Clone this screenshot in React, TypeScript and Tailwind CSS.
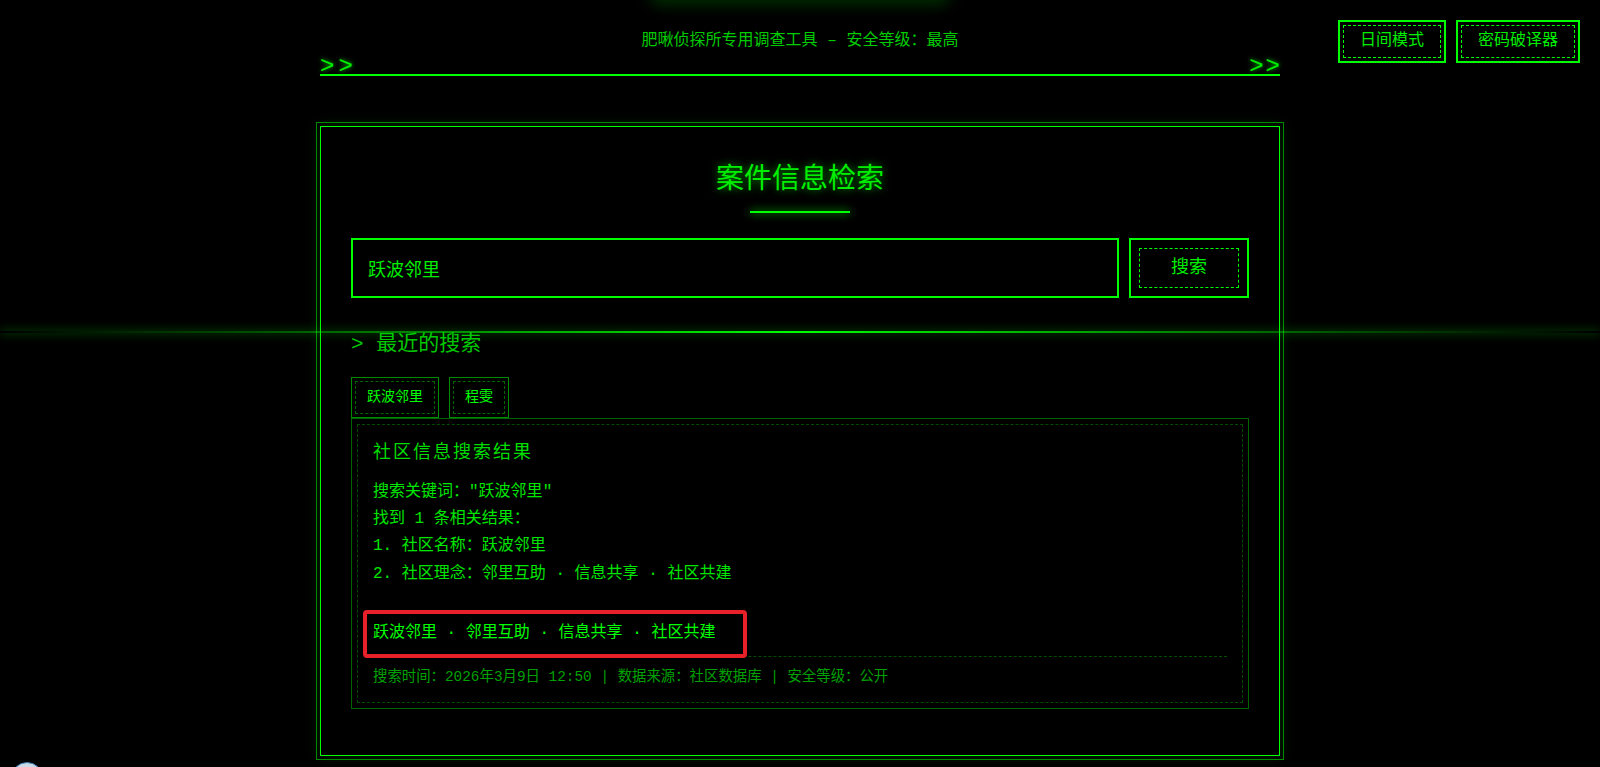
import { useState } from "react"

const recent = ["跃波邻里", "程雯"]

function DashBtn({ label }: { label: string }) {
  return (
    <button className="border-2 border-[#00ff00] p-[3px] bg-black">
      <span className="block border border-dashed border-[#00ff00] px-[16px] py-[6px] text-[16px] leading-[19px] text-[#00ee00]">{label}</span>
    </button>
  )
}

export default function App() {
  const [q, setQ] = useState("跃波邻里")

  return (
    <div className="relative min-h-screen bg-black overflow-hidden font-['Liberation_Mono','Noto_Sans_CJK_SC',monospace] text-[#00ff00]">
      {/* glow bleeding in from the top edge */}
      <div className="absolute top-[-14px] left-[650px] w-[300px] h-[18px] rounded-full bg-[#00ff00] opacity-20 blur-[8px]"></div>

      {/* scan line */}
      <div className="absolute top-[331px] left-0 right-0 h-[2px] z-10 bg-linear-to-r from-transparent via-[#00ff00] to-transparent shadow-[0_0_10px_rgba(0,255,0,0.6)]"></div>

      {/* top right tools */}
      <div className="absolute top-[20px] right-[20px] flex gap-[10px]">
        <DashBtn label="日间模式" />
        <DashBtn label="密码破译器" />
      </div>

      <header className="w-[960px] mx-auto pt-[31px] border-b-2 border-[#00ff00]">
        <p className="text-center text-[16px] leading-[20px] text-[#00cc00]">肥啾侦探所专用调查工具 – 安全等级：最高</p>
        <div className="flex justify-between h-[23px] text-[24px] leading-[32px] tracking-[4px] text-[#00ee00] [text-shadow:0_0_4px_rgba(0,255,0,0.8)]">
          <span>&gt;&gt;</span>
          <span className="tracking-[2px] -mr-[2px]">&gt;&gt;</span>
        </div>
      </header>

      <main className="w-[960px] mx-auto mt-[50px] border border-[#00ff00] outline outline-1 outline-[#008a00] outline-offset-[3px] shadow-[0_0_14px_rgba(0,255,0,0.15)] pt-[30px] px-[30px] pb-[46px]">
        <h1 className="pt-[4px] text-center text-[28px] leading-[39px] text-[#00ee00] [text-shadow:0_0_8px_rgba(0,255,0,0.6)]">案件信息检索</h1>
        <div className="w-[100px] h-[2px] mx-auto mt-[11px] mb-[25px] bg-[#00ff00] shadow-[0_0_8px_#00ff00]"></div>

        <div className="flex gap-[10px]">
          <input
            className="flex-1 h-[60px] border-2 border-[#00ff00] bg-black px-[15px] text-[18px] text-[#00ee00] outline-none"
            value={q}
            onChange={(e) => setQ(e.target.value)}
          />
          <button className="w-[120px] h-[60px] border-2 border-[#00ff00] bg-black p-[8px]">
            <span className="flex h-full items-center justify-center border border-dashed border-[#00ff00] text-[18px] text-[#00ee00]">搜索</span>
          </button>
        </div>

        <h2 className="mt-[32px] text-[21px] leading-[30px] text-[#00c800]">&gt; 最近的搜索</h2>

        <div className="mt-[17px] flex gap-[10px]">
          {recent.map((r) => (
            <button key={r} onClick={() => setQ(r)} className="border border-[#008a00] p-[3px]">
              <span className="block border border-dashed border-[#006400] px-[11px] py-[6px] text-[14px] leading-[19px] text-[#00ff00]">{r}</span>
            </button>
          ))}
        </div>

        <div className="border border-[#006400] p-[5px]">
          <div className="border border-dashed border-[#004d00] px-[15px] pt-[15px] pb-[15px]">
            <h3 className="text-[18px] leading-[26px] tracking-[2px] text-[#00dd00]">社区信息搜索结果</h3>
            <div className="mt-[13px] text-[16px] leading-[27.2px] text-[#00e600]">
              <p>搜索关键词："{q}"</p>
              <p>找到 1 条相关结果：</p>
              <p>1. 社区名称：跃波邻里</p>
              <p>2. 社区理念：邻里互助 · 信息共享 · 社区共建</p>
            </div>
            <div className="relative z-10 mt-[22px] -ml-[10px] w-[384px] h-[48px] border-[4px] border-[#e8202a] rounded-[4px] pl-[6px] pt-[6px] text-[16px] leading-[27.2px] text-[#00ff00] whitespace-nowrap">
              跃波邻里 · 邻里互助 · 信息共享 · 社区共建
            </div>
            <div className="-mt-[2px] pt-[10px] border-t border-dashed border-[#004d00] text-[14.4px] leading-[20px] text-[#00a000]">
              搜索时间：2026年3月9日 12:50 | 数据来源：社区数据库 | 安全等级：公开
            </div>
          </div>
        </div>
      </main>

      <div className="absolute left-[11px] top-[762px] w-[32px] h-[32px] rounded-full bg-[#c9d9e6] border border-[#3b78b0]"></div>
    </div>
  )
}
